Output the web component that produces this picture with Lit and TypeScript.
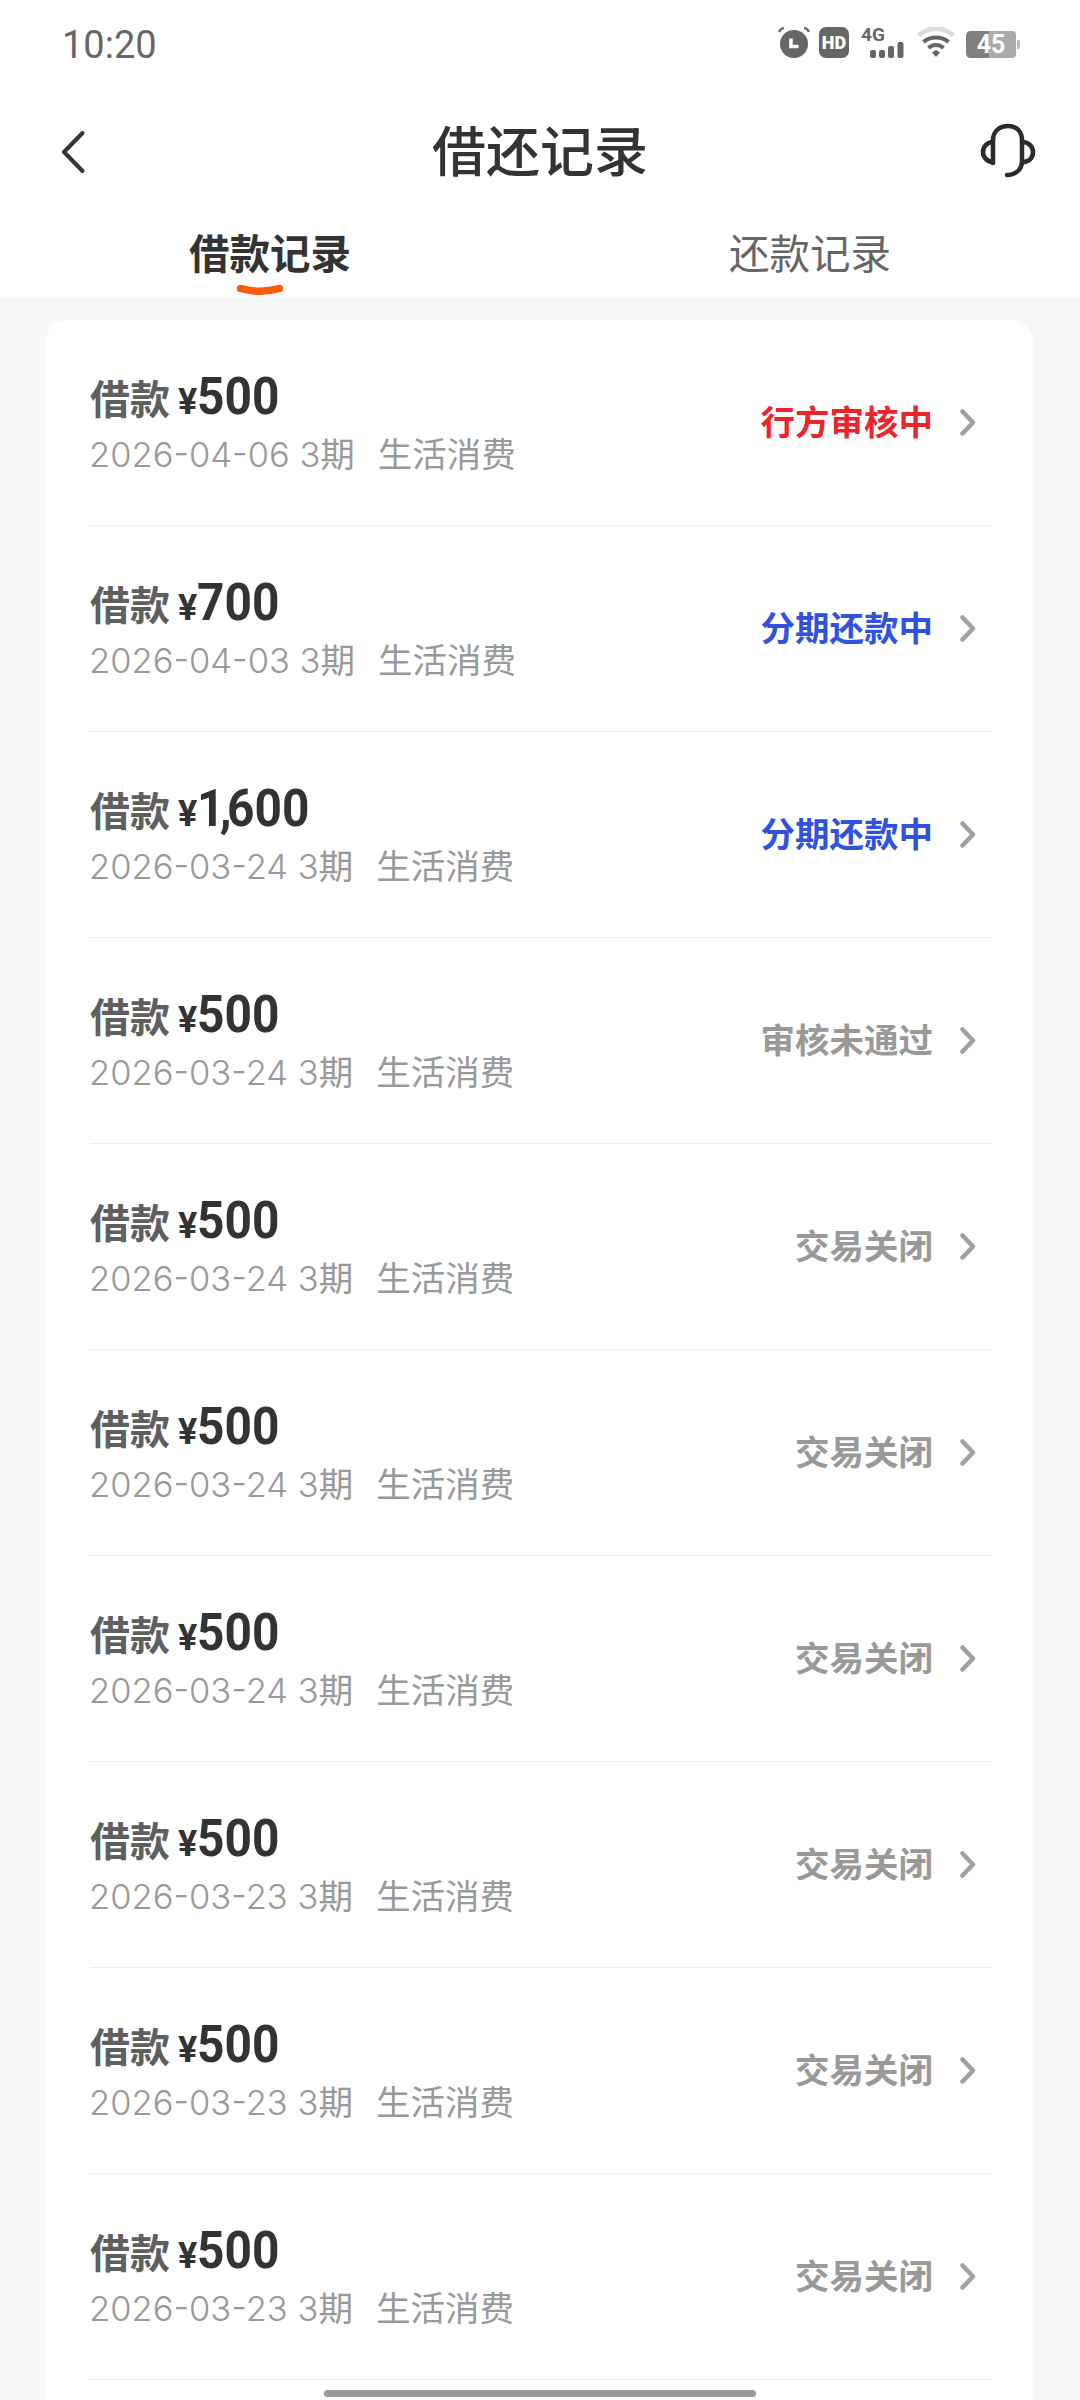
import { LitElement, html, css, svg } from "lit";
import { customElement } from "lit/decorators.js";

type Loan = { amount: string; date: string; status: string; tone: "red" | "blue" | "gray" };

const loans: Loan[] = [
  { amount: "500", date: "2026-04-06", status: "行方审核中", tone: "red" },
  { amount: "700", date: "2026-04-03", status: "分期还款中", tone: "blue" },
  { amount: "1,600", date: "2026-03-24", status: "分期还款中", tone: "blue" },
  { amount: "500", date: "2026-03-24", status: "审核未通过", tone: "gray" },
  { amount: "500", date: "2026-03-24", status: "交易关闭", tone: "gray" },
  { amount: "500", date: "2026-03-24", status: "交易关闭", tone: "gray" },
  { amount: "500", date: "2026-03-24", status: "交易关闭", tone: "gray" },
  { amount: "500", date: "2026-03-23", status: "交易关闭", tone: "gray" },
  { amount: "500", date: "2026-03-23", status: "交易关闭", tone: "gray" },
  { amount: "500", date: "2026-03-23", status: "交易关闭", tone: "gray" },
];

const chevron = svg`<path d="M2.500 2.500 L13 13.500 L2.500 24.500" fill="none" stroke="#a0a0a0" stroke-width="4.500" stroke-linecap="round" stroke-linejoin="round"/>`;

@customElement("app-root")
export class AppRoot extends LitElement {
  static styles = css`
    :host {
      display: block;
      position: relative;
      width: 1080px;
      height: 2400px;
      overflow: hidden;
      background: #f8f8f8;
      font-family: "Noto Sans CJK SC", Roboto, sans-serif;
    }

    .top {
      background: #fff;
      height: 297px;
      display: flex;
      flex-direction: column;
    }

    .status-bar {
      height: 103px;
      padding: 23px 60px 0 62px;
      box-sizing: border-box;
      display: flex;
      justify-content: space-between;
      align-items: flex-start;
    }

    .time {
      font: 400 38px/44px Roboto, sans-serif;
      color: #666;
    }

    .indicators {
      display: flex;
      align-items: flex-start;
      margin-top: 4px;
    }

    .alarm { margin-right: 9px; }
    .hd { margin-right: 12px; }
    .signal { margin-right: 13px; overflow: visible; }
    .wifi { margin-right: 11px; }
    .battery { margin-top: 4px; }

    .nav {
      height: 92px;
      padding: 0 43px;
      display: grid;
      grid-template-columns: 1fr auto 1fr;
      align-items: center;
    }

    .back {
      margin: 5px 0 0 17px;
    }

    .headset {
      justify-self: end;
      margin-top: 6px;
    }

    .title {
      font-size: 54px;
      line-height: 70px;
      font-weight: 500;
      color: #333;
    }

    .tabs {
      display: grid;
      grid-template-columns: 1fr 1fr;
      padding-top: 32px;
    }

    .tab {
      position: relative;
      text-align: center;
      font-size: 40.500px;
      line-height: 50px;
      color: #666;
    }

    .tab.active {
      font-weight: 700;
      color: #333;
    }

    .tab-mark {
      position: absolute;
      left: 237px;
      top: 58px;
    }

    .card {
      margin: 23px 47px 0 46px;
      background: #fff;
      border-radius: 22px 22px 0 0;
      padding: 0 41px 60px 44px;
    }

    .row {
      height: 206px;
      box-sizing: border-box;
      border-bottom: 1px solid #eeeeee;
      display: flex;
      justify-content: space-between;
      align-items: flex-start;
    }

    .info {
      padding-top: 48px;
    }

    .headline {
      display: flex;
      align-items: baseline;
      height: 58px;
      line-height: 58px;
    }

    .label {
      font-size: 40px;
      font-weight: 700;
      color: #5f5f5f;
    }

    .currency {
      font: 700 36px/58px Roboto, sans-serif;
      color: #333;
      margin-left: 8px;
    }

    .amount {
      display: inline-block;
      font: 700 52px/58px Roboto, sans-serif;
      color: #333;
      transform: scaleX(0.92);
      transform-origin: left center;
    }

    .comma {
      margin: 0 -5px;
    }

    .meta {
      display: flex;
      gap: 23px;
      margin: 4px 0 0 -1px;
      font-size: 34.500px;
      line-height: 44px;
      color: #999;
    }

    .date {
      font-family: Inter, sans-serif;
      font-weight: 300;
    }

    .state {
      display: flex;
      align-items: center;
      gap: 27px;
      padding: 75px 16px 0 0;
      font-size: 34.500px;
      line-height: 50px;
      font-weight: 700;
    }

    .state svg {
      margin-top: 5px;
    }

    .red { color: #f0222b; }
    .blue { color: #2f52e0; }
    .gray { color: #999; }

    .home-bar {
      position: absolute;
      left: 324px;
      top: 2390px;
      width: 432px;
      height: 7px;
      border-radius: 4px;
      background: #999;
    }
  `;

  private renderIndicators() {
    return html`<div class="indicators">
      <svg class="alarm" width="32" height="31" viewBox="0 0 32 31">
        <circle cx="16" cy="17" r="14" fill="#666" />
        <path d="M1 5 Q2.500 1.500 6 1 M26 1 Q29.500 1.500 31 5" stroke="#666" stroke-width="2.200" fill="none" />
        <path d="M13 11.500 V19.500 H20.500" stroke="#fff" stroke-width="3.500" fill="none" />
      </svg>
      <svg class="hd" width="30" height="31" viewBox="0 0 30 31">
        <rect width="30" height="31" rx="7" fill="#666" />
        <text x="15" y="22" text-anchor="middle" font-family="Roboto" font-weight="900" font-size="18" fill="#fff">HD</text>
      </svg>
      <svg class="signal" width="43" height="31" viewBox="0 0 43 31">
        <text x="0" y="14" font-family="Roboto" font-weight="700" font-size="19" fill="#666">4G</text>
        <rect x="9" y="23" width="6" height="8" rx="2" fill="#666" />
        <rect x="18" y="23" width="6" height="8" rx="2" fill="#666" />
        <rect x="27" y="19" width="6" height="12" rx="2" fill="#666" />
        <rect x="36.500" y="15" width="6" height="16" rx="2" fill="#666" />
      </svg>
      <svg class="wifi" width="38" height="31" viewBox="0 0 38 31">
        <path d="M1.500 8.500 C11 -0.500 27 -0.500 36.500 8.500" stroke="#dcdcdc" stroke-width="4.500" fill="none" />
        <path d="M6.500 15 C13.500 9 24.500 9 31.500 15" stroke="#666" stroke-width="4" fill="none" />
        <path d="M11.500 21 C15.500 17 22.500 17 26.500 21" stroke="#666" stroke-width="4" fill="none" />
        <path d="M15 25.500 L19 23 L23 25.500 L19 30 Z" fill="#666" />
      </svg>
      <svg class="battery" width="54" height="27" viewBox="0 0 54 27">
        <path d="M23 0 H46 Q50 0 50 4 V23 Q50 27 46 27 H23 Z" fill="#aaa" />
        <path d="M23 0 H5 Q0 0 0 5 V22 Q0 27 5 27 H23 Z" fill="#808080" />
        <path d="M51 9 H52 Q54 9 54 11 V16 Q54 18 52 18 H51 Z" fill="#bbb" />
        <text x="25" y="22" text-anchor="middle" font-family="Roboto" font-weight="700" font-size="25" fill="#fff">45</text>
      </svg>
    </div>`;
  }

  private renderAmount(amount: string) {
    const parts = amount.split(",");
    if (parts.length < 2) return amount;
    return html`${parts[0]}<span class="comma">,</span>${parts[1]}`;
  }

  private renderRow(loan: Loan) {
    return html`<div class="row">
      <div class="info">
        <div class="headline">
          <span class="label">借款</span><span class="currency">¥</span><span class="amount">${this.renderAmount(loan.amount)}</span>
        </div>
        <div class="meta">
          <span><span class="date">${loan.date} 3</span>期</span>
          <span>生活消费</span>
        </div>
      </div>
      <div class="state ${loan.tone}">
        <span>${loan.status}</span>
        <svg width="16" height="27" viewBox="0 0 16 27">${chevron}</svg>
      </div>
    </div>`;
  }

  render() {
    return html`
      <div class="top">
        <div class="status-bar">
          <span class="time">10:20</span>
          ${this.renderIndicators()}
        </div>
        <div class="nav">
          <svg class="back" width="28" height="44" viewBox="0 0 28 44">
            <path d="M22.500 3 L4 22 L22.500 41" fill="none" stroke="#333" stroke-width="4" stroke-linecap="round" stroke-linejoin="round" />
          </svg>
          <span class="title">借还记录</span>
          <svg class="headset" width="58" height="58" viewBox="0 0 58 58">
            <path d="M14 40 V17 C14 8 21 3 29 3 C37 3 43 8 43 17 V38 C43 47 36 52 28 52" fill="none" stroke="#2b2b2b" stroke-width="4.500" stroke-linecap="round" />
            <path d="M14 19 C8 19 4 24 4 29 C4 35 9 39 14 39 M43 19 C50 19 54 24 54 29 C54 35 50 39 43 39" fill="none" stroke="#2b2b2b" stroke-width="4.500" stroke-linecap="round" />
          </svg>
        </div>
        <div class="tabs">
          <div class="tab active">
            借款记录
            <svg class="tab-mark" width="46" height="14" viewBox="0 0 46 14">
              <path d="M3.500 3.500 Q23 9 42.500 3.500" fill="none" stroke="#ff5a0a" stroke-width="7.500" stroke-linecap="round" />
            </svg>
          </div>
          <div class="tab">还款记录</div>
        </div>
      </div>
      <div class="card">${loans.map((loan) => this.renderRow(loan))}</div>
      <div class="home-bar"></div>
    `;
  }
}
